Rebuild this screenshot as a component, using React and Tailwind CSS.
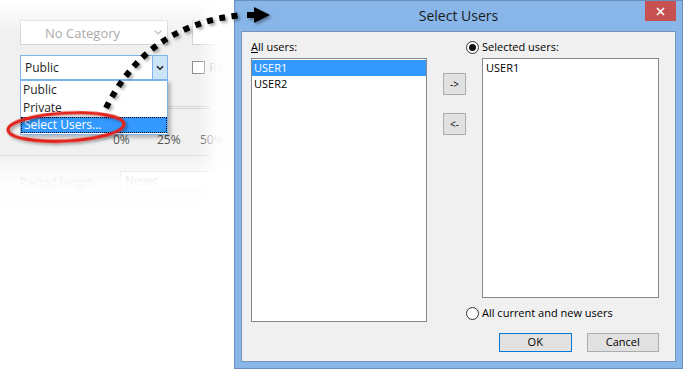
export default function App() {
  return (
    <div className="relative flex w-[683px] h-[369px] overflow-hidden bg-white font-['Open_Sans','Noto_Sans',sans-serif]">
      {/* Left faded background screenshot */}
      <div className="relative w-[234px] h-full shrink-0 bg-white">
        <div className="h-[215px] bg-[#f0f0f0] pt-[20px] pl-[20px] text-[12px] leading-[16px]">
          {/* row 1 */}
          <div className="flex items-start">
            <div className="w-[148px] h-[25px] bg-white border border-[#d4d4d4] flex items-center justify-between pl-[24px] pr-[5px] text-[#a8a8a8] text-[13px]">
              <span>No Category</span>
              <svg width="8" height="5" viewBox="0 0 8 5"><path d="M0.5 0.5 L4 4 L7.5 0.5" fill="none" stroke="#bbb" strokeWidth="1.2" /></svg>
            </div>
            <div className="ml-[24px] w-[40px] h-[25px] bg-white border border-[#d4d4d4]" />
          </div>
          {/* row 2 */}
          <div className="mt-[10px] flex items-start">
            <div className="relative w-[148px] h-[25px] bg-white border border-[#7eb4ea] flex">
              <div className="flex-1 flex items-center pl-[4px] text-[#1e1e1e]">Public</div>
              <div className="w-[15px] bg-[#cce4f7] border-l border-[#7eb4ea] flex items-center justify-center">
                <svg width="8" height="6" viewBox="0 0 8 6"><path d="M1 1.2 L4 4.2 L7 1.2" fill="none" stroke="#1e1e1e" strokeWidth="1.6" /></svg>
              </div>
              {/* dropdown list (overlay) */}
              <div className="absolute left-[-1px] top-[23px] w-[148px] h-[56px] bg-white border border-[#7eb4ea] border-t-2 shadow-[3px_3px_3px_rgba(0,0,0,0.22)] flex flex-col text-[#1e1e1e]">
                <div className="h-[18px] flex items-center pl-[2px]">Public</div>
                <div className="h-[18px] flex items-center pl-[2px]">Private</div>
                <div className="h-[16px] flex items-center pl-[2px] bg-[#3399ff] text-white border border-dotted border-black">Select Users...</div>
              </div>
            </div>
            <div className="ml-[24px] mt-[6px] w-[13px] h-[13px] bg-white border border-[#8f8f8f]" />
            <span className="ml-[4px] mt-[4px] text-[#9a9a9a] text-[13px]">Re</span>
          </div>
          {/* slider track */}
          <div className="mt-[26px] w-[190px] h-[3px] border-y border-[#d6d6d6]" />
          {/* percentages */}
          <div className="mt-[24px] flex text-[#555] h-[14px] leading-[14px]">
            <span className="ml-[93px] w-[44px]">0%</span>
            <span className="w-[43px]">25%</span>
            <span>50%</span>
          </div>
          <div className="mt-[8px] -ml-[20px] w-[212px] border-t border-[#d5d5d5]" />
          {/* row bottom */}
          <div className="mt-[15px] flex items-start">
            <span className="mt-[4px] w-[100px] text-[#9a9a9a]">Period length:</span>
            <div className="w-[95px] h-[20px] bg-white border border-[#cfcfcf] pl-[4px] text-[#9a9a9a] leading-[18px]">Never</div>
          </div>
        </div>
        {/* fades */}
        <div className="absolute top-0 left-0 right-0 h-[34px] bg-linear-to-b from-white to-white/0" />
        <div className="absolute top-0 right-0 bottom-0 w-[36px] bg-linear-to-l from-white via-white/90 to-white/0" />
        <div className="absolute left-0 right-0 top-[150px] h-[65px] bg-linear-to-t from-white via-white/90 to-white/0" />
      </div>

      {/* Dialog */}
      <div className="w-[449px] h-[369px] shrink-0 flex flex-col border border-[#6b8fbd] bg-[#88b6e9] px-[6px] pb-[6px]">
        <div className="h-[30px] grid grid-cols-[1fr_auto_1fr] items-center -mx-[6px]">
          <div />
          <div className="text-[14px] text-[#1a1a1a] leading-[20px]">Select Users</div>
          <div className="flex justify-end self-start pr-[6px]">
            <div className="w-[31px] h-[20px] bg-[#c75050] flex items-center justify-center">
              <svg width="9" height="9" viewBox="0 0 9 9"><path d="M1 1 L8 8 M8 1 L1 8" stroke="#fff" strokeWidth="1.7" /></svg>
            </div>
          </div>
        </div>
        <div className="flex-1 border border-[#7593bb] bg-[#f0f0f0] flex pl-[9px] text-[11px] text-black">
          {/* left column */}
          <div className="w-[176px] flex flex-col">
            <div className="h-[26px] pt-[5px] flex items-center">
              <span><span className="underline">A</span>ll users:</span>
            </div>
            <div className="h-[264px] bg-white border border-[#828790] pt-[1px] flex flex-col">
              <div className="h-[16px] bg-[#3399ff] text-white pl-[2px] flex items-center">USER1</div>
              <div className="h-[16px] pl-[2px] flex items-center">USER2</div>
            </div>
          </div>
          {/* middle buttons */}
          <div className="ml-[16px] w-[23px] pt-[41px] flex flex-col gap-[18px]">
            <div className="h-[22px] bg-[#e1e1e1] border border-[#adadad] flex items-center justify-center text-[10px]">-&gt;</div>
            <div className="h-[22px] bg-[#e1e1e1] border border-[#adadad] flex items-center justify-center text-[10px]">&lt;-</div>
          </div>
          {/* right column */}
          <div className="w-[193px] flex flex-col">
            <div className="h-[26px] pt-[5px] flex items-center">
              <div className="w-[13px] h-[13px] rounded-full border border-[#333] bg-white flex items-center justify-center">
                <div className="w-[7px] h-[7px] rounded-full bg-[#111]" />
              </div>
              <span className="ml-[3px]">Selected users:</span>
            </div>
            <div className="ml-[16px] w-[177px] h-[240px] bg-white border border-[#828790] pt-[1px] pl-[3px]">
              <div className="h-[16px] flex items-center">USER1</div>
            </div>
            <div className="mt-[8px] h-[14px] flex items-center">
              <div className="w-[13px] h-[13px] rounded-full border border-[#333] bg-white" />
              <span className="ml-[3px]">All current and new users</span>
            </div>
            <div className="mt-[13px] ml-[33px] flex gap-[15px]">
              <div className="w-[73px] h-[19px] bg-[#e1e1e1] border border-[#0078d7] flex items-center justify-center">OK</div>
              <div className="w-[73px] h-[19px] bg-[#e1e1e1] border border-[#adadad] flex items-center justify-center">Cancel</div>
            </div>
          </div>
        </div>
      </div>

      {/* annotation overlay */}
      <svg className="absolute inset-0 pointer-events-none" width="683" height="369" viewBox="0 0 683 369">
        <defs>
          <filter id="sh" x="-20%" y="-50%" width="140%" height="200%">
            <feDropShadow dx="2" dy="2" stdDeviation="1.5" floodColor="#000" floodOpacity="0.35" />
          </filter>
        </defs>
        <ellipse cx="66" cy="127" rx="58" ry="14" fill="none" stroke="#e2231a" strokeWidth="3.2" transform="rotate(-3 66 127)" filter="url(#sh)" />
        <path d="M106,108 C130,60 170,22 242,15" fill="none" stroke="#000" strokeWidth="6" strokeDasharray="6 6.5" filter="url(#sh)" />
        <polygon points="247,12 254,12 254,7 270,15 254,23 254,18 247,18" fill="#000" filter="url(#sh)" />
      </svg>
    </div>
  );
}
